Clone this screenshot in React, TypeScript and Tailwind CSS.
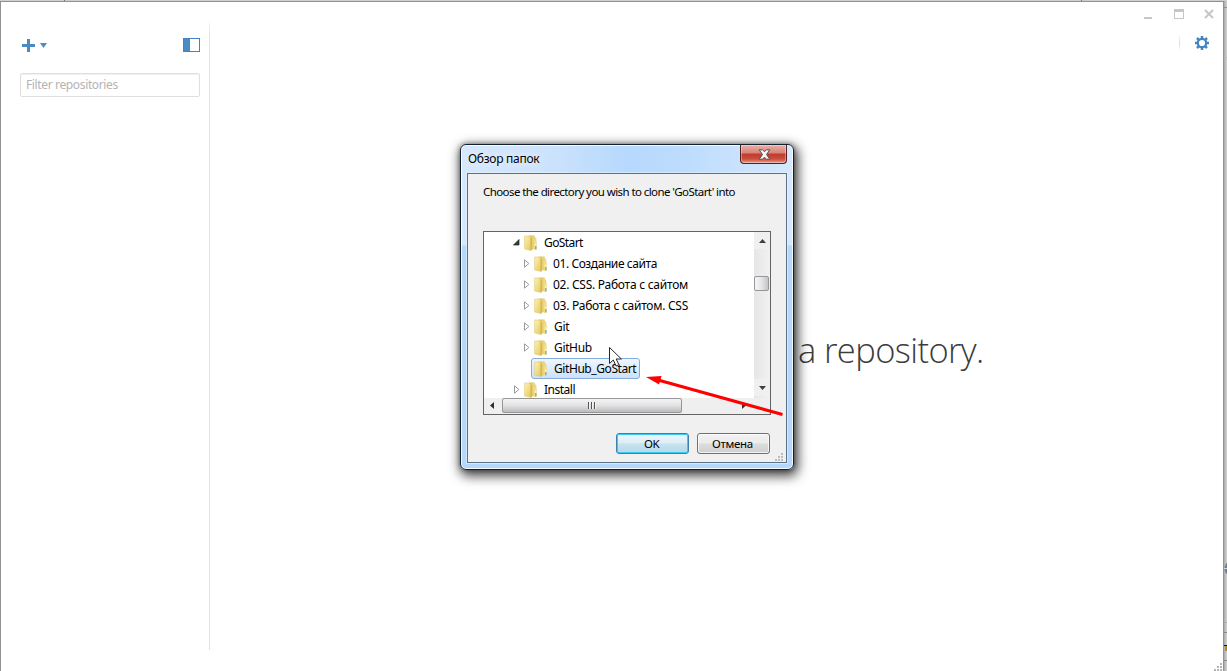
import React from "react";

type Row = { label: string; depth: 0 | 1; state: "open" | "closed" | "leaf"; width: string };

const rows: Row[] = [
  { label: "GoStart", depth: 0, state: "open", width: "tracking-[-0.6px]" },
  { label: "01. Создание сайта", depth: 1, state: "closed", width: "-ml-px tracking-[-0.42px]" },
  { label: "02. CSS. Работа с сайтом", depth: 1, state: "closed", width: "-ml-px tracking-[-0.26px]" },
  { label: "03. Работа с сайтом. CSS", depth: 1, state: "closed", width: "-ml-px tracking-[-0.26px]" },
  { label: "Git", depth: 1, state: "closed", width: "tracking-[-0.3px]" },
  { label: "GitHub", depth: 1, state: "closed", width: "tracking-[-0.35px]" },
  { label: "GitHub_GoStart", depth: 1, state: "leaf", width: "tracking-[-0.42px]" },
  { label: "Install", depth: 0, state: "closed", width: "tracking-[-0.5px]" },
];

function Folder() {
  return (
    <svg width="14" height="16" viewBox="0 0 14 16" className="shrink-0">
      <defs>
        <linearGradient id="fold" x1="0" y1="0" x2="1" y2="1">
          <stop offset="0" stopColor="#fbf3b6" />
          <stop offset="1" stopColor="#e6c85c" />
        </linearGradient>
        <linearGradient id="back" x1="0" y1="0" x2="1" y2="0">
          <stop offset="0" stopColor="#dcba4c" />
          <stop offset="1" stopColor="#f3e393" />
        </linearGradient>
      </defs>
      <path d="M5 .8h5.500v2.200h1.500v11H5z" fill="url(#back)" stroke="#e0cb7c" strokeWidth=".6" />
      <path d="M10 6.500h2.800v8.500H10z" fill="#f1de8b" />
      <path d="M.6 1h4.600l1.800 1.500v12.900L.6 14z" fill="url(#fold)" stroke="#dfca78" strokeWidth=".6" />
      <path d="M6.600 2.600l1.200.6v12.200l-1.200-.2z" fill="#d3b143" />
      <path d="M11.200 8.500h1.200v2.500h-1.200z" fill="#e6f5f7" />
      <path d="M11.200 11h1.200v3.300h-1.200z" fill="#55aee0" />
    </svg>
  );
}

function Twisty({ state }: { state: Row["state"] }) {
  return (
    <svg width="7" height="9" viewBox="0 0 7 9" className="shrink-0">
      {state === "open" && <path d="M6 1.500V7H.5z" fill="#3a3a3a" stroke="#222" strokeWidth=".7" />}
      {state === "closed" && <path d="M1.500.8v7.400L5.900 4.500z" fill="#fff" stroke="#9a9a9a" strokeWidth="1" />}
    </svg>
  );
}

function TreeRow({ row }: { row: Row }) {
  const selected = row.state === "leaf";
  return (
    <div className={"flex h-[21px] shrink-0 items-center " + (row.depth ? "pl-[39px]" : "pl-[29px]")}>
      <Twisty state={row.state} />
      <div
        className={
          "ml-px flex h-[21px] items-center rounded-[3px] border pl-[2px] " +
          (selected
            ? "w-[109px] border-[#84acdd] bg-gradient-to-b from-[#eff6fe] to-[#cce1fb]"
            : "border-transparent")
        }
      >
        <Folder />
        <div className="ml-[6px] flex">
          <span className={"text-[12px] leading-[18px] whitespace-nowrap text-black " + row.width}>{row.label}</span>
        </div>
      </div>
    </div>
  );
}

function VerticalScrollbar() {
  return (
    <div className="flex w-[16px] shrink-0 flex-col items-start bg-gradient-to-r from-[#e6e6e6] to-[#f1f1f1]">
      <div className="flex h-[17px] w-full items-center justify-center bg-[#f0f0f0]">
        <svg width="7" height="4" viewBox="0 0 7 4"><path d="M0 4L3.500 0 7 4z" fill="#404040" /></svg>
      </div>
      <div className="mt-[27px] h-[15px] w-[15px] rounded-[2px] border border-[#979797] bg-gradient-to-r from-[#f5f5f5] via-[#e6e6e9] to-[#c4c4c8]" />
      <div className="grow" />
      <div className="mb-[2px] flex h-[17px] w-full items-center justify-center bg-[#f0f0f0]">
        <svg width="7" height="4" viewBox="0 0 7 4"><path d="M0 0h7L3.500 4z" fill="#404040" /></svg>
      </div>
    </div>
  );
}

function HorizontalScrollbar() {
  return (
    <div className="flex h-[16px] shrink-0 items-start bg-[#efefef]">
      <div className="flex h-[15px] w-[18px] items-center justify-center pr-[2px]">
        <svg width="4" height="7" viewBox="0 0 4 7"><path d="M4 0v7L0 3.500z" fill="#303030" /></svg>
      </div>
      <div className="flex h-[15px] w-[180px] items-center justify-center gap-px rounded-[2px] border border-[#979797] bg-gradient-to-b from-[#f4f4f4] via-[#e2e2e4] to-[#bcbcbf]">
        <div className="h-[7px] w-[2px] border-r border-[#f5f5f5] bg-[#555]" />
        <div className="h-[7px] w-[2px] border-r border-[#f5f5f5] bg-[#555]" />
        <div className="h-[7px] w-[2px] border-r border-[#f5f5f5] bg-[#555]" />
      </div>
      <div className="grow" />
      <svg width="4" height="7" viewBox="0 0 4 7" className="mt-[4px] mr-[24px]"><path d="M0 0v7l4-3.500z" fill="#303030" /></svg>
    </div>
  );
}

function Grip({ color }: { color: string }) {
  return (
    <svg width="8" height="8" viewBox="0 0 8 8" fill={color}>
      <path d="M6 0h2v2H6zM3 3h2v2H3zM6 3h2v2H6zM0 6h2v2H0zM3 6h2v2H3zM6 6h2v2H6z" />
    </svg>
  );
}

function FolderDialog() {
  return (
    <div className="absolute top-[144px] left-[460px] flex h-[326px] w-[334px] flex-col rounded-[6px] border border-[#14202d] bg-[linear-gradient(180deg,transparent_100px,#b5d7fb_101px,#b5d7fb_100%),linear-gradient(90deg,#d6e8fc_0%,#cde3fc_25%,#b7d9fd_50%,#bddcfd_67%,#d5e8fd_100%)] px-[6px] pb-[6px] shadow-[inset_0_0_0_1px_rgba(255,255,255,0.85),2px_4px_12px_2px_rgba(0,0,0,0.72),0_0_5px_rgba(0,0,0,0.4)]">
      <div className="flex h-[28px] shrink-0 items-start justify-between">
        <span className="mt-[5px] ml-px text-[12px] leading-[17px] tracking-[-0.27px] text-black [text-shadow:0_0_8px_#fff]">Обзор папок</span>
        <div className="flex h-[19px] w-[47px] items-center justify-center rounded-b-[4px] border border-t-0 border-[#511f25] bg-[linear-gradient(180deg,#e7b1a8_0%,#d98276_45%,#bf3b2b_50%,#c9503f_78%,#e99c87_100%)] shadow-[inset_0_0_0_1px_rgba(255,255,255,0.35)]">
          <svg width="13" height="11" viewBox="0 0 13 11" className="ml-px">
            <path d="M1.200.8h3.400l1.900 2 1.900-2h3.400L8.500 5.500l3.300 4.700H8.400l-1.900-2-1.900 2H1.200l3.300-4.700z" fill="#f6f6f6" stroke="#52505e" strokeWidth="1" />
          </svg>
        </div>
      </div>
      <div className="flex grow flex-col border border-[#5c7183] bg-[#f0f0f0] px-[15px] shadow-[0_0_0_1px_rgba(230,243,255,0.6)]">
        <p className="mt-[9px] h-[49px] text-[11.5px] leading-[17px] tracking-[-0.58px] whitespace-nowrap text-black">
          Choose the directory you wish to clone 'GoStart' into
        </p>
        <div className="-mt-px flex h-[184px] w-[288px] shrink-0 flex-col border border-[#646464] bg-white">
          <div className="flex h-[166px] overflow-hidden">
            <div className="flex grow flex-col overflow-hidden">
              {rows.map((r) => <TreeRow key={r.label} row={r} />)}
            </div>
            <VerticalScrollbar />
          </div>
          <HorizontalScrollbar />
        </div>
        <div className="mt-[18px] mr-px flex justify-end gap-[8px]">
          <button className="h-[21px] w-[73px] rounded-[3px] border border-[#3c7fb1] bg-[linear-gradient(180deg,#eef7fb_0%,#dceef7_48%,#c6e2ef_52%,#b5d9e9_100%)] pr-[2px] text-[11.5px] leading-[19px] tracking-[-0.6px] text-black shadow-[inset_0_0_0_1px_#36ccf6]">OK</button>
          <button className="h-[21px] w-[73px] rounded-[3px] border border-[#707070] bg-[linear-gradient(180deg,#f3f3f3_0%,#ebebeb_48%,#dddddd_52%,#cfcfcf_100%)] pr-[2px] text-[11.5px] leading-[19px] tracking-[-0.3px] text-black shadow-[inset_0_0_0_1px_rgba(255,255,255,0.75)]">Отмена</button>
        </div>
        <div className="mt-[-1px] -mr-[12px] flex justify-end"><Grip color="#bcbcbc" /></div>
      </div>
    </div>
  );
}

function Sidebar() {
  return (
    <aside className="flex w-[208px] shrink-0 flex-col pt-[36px] pr-[9px] pl-[19px]">
      <div className="flex h-[14px] items-center">
        <svg width="13" height="13" viewBox="0 0 13 13" className="ml-[2px]"><path d="M5 0h3v5h5v3H8v5H5V8H0V5h5z" fill="#4b8bc4" /></svg>
        <svg width="7" height="5" viewBox="0 0 7 5" className="ml-[5px]"><path d="M0 0h7L3.500 5z" fill="#4b8bc4" /></svg>
        <div className="grow" />
        <div className="flex h-[14px] w-[17px] border border-[#4183c4] bg-white"><div className="w-[6px] bg-[#4b8bc4]" /></div>
      </div>
      <div className="mt-[21px] flex h-[24px] items-center rounded-[2px] border border-[#dfdfdf] pl-[5px] text-[12px] tracking-[-0.36px] text-[#b4b4b4] shadow-[inset_0_1px_1px_rgba(0,0,0,0.06)]">
        Filter repositories
      </div>
    </aside>
  );
}

function WindowControls() {
  return (
    <div className="flex flex-col items-end">
      <svg width="70" height="10" viewBox="0 0 70 10" className="mt-[7px] mr-[9px]" fill="#c6c6c6">
        <path d="M0 8h8v2H0zM30 0h10v10H30zm1 3v6h8V3z" fillRule="evenodd" />
        <path d="M61 1l8 8M69 1l-8 8" stroke="#c6c6c6" strokeWidth="2" />
      </svg>
      <div className="mt-[15px] mr-[14px] flex items-center">
        <div className="mr-[15px] h-[18px] w-px bg-gradient-to-b from-white via-[#dcdcdc] to-white" />
        <svg width="14" height="14" viewBox="0 0 14 14">
          <circle cx="7" cy="7" r="4.200" fill="none" stroke="#4183c4" strokeWidth="2.200" />
          <path d="M7 0v2M7 12v2M0 7h2M12 7h2M2 2l1.600 1.600M10.400 10.400L12 12M12 2l-1.600 1.600M3.600 10.400L2 12" stroke="#4183c4" strokeWidth="2.500" />
        </svg>
      </div>
    </div>
  );
}

function BackgroundEdge() {
  return (
    <div className="flex w-[3px] shrink-0 flex-col overflow-hidden bg-gradient-to-r from-[#aaaaaa] to-[#d6d6d6]">
      <div className="h-[7px] shrink-0 border-b border-[#929292]" />
      <div className="h-[50px] shrink-0 border-b border-[#bbb]" />
      <div className="h-[502px] shrink-0" />
      <svg width="3" height="17" viewBox="0 0 3 17" className="shrink-0">
        <circle cx="9" cy="8.500" r="8.500" fill="#747f92" />
        <path d="M0 8h3v1H0z" fill="#d1d5dc" />
      </svg>
      <div className="h-[46px] shrink-0 border-b border-[#aaa]" />
      <div className="h-[10px] shrink-0 border-b border-[#888]" />
      <div className="h-[13px] shrink-0 border-b border-[#111]" />
      <div className="ml-px h-[5px] w-[2px] shrink-0 bg-[#ba8b17]" />
      <div className="h-[10px] shrink-0 border-b border-[#888]" />
    </div>
  );
}

export default function App() {
  return (
    <div className="relative flex h-[671px] w-[1227px] flex-col overflow-hidden bg-white font-['Noto_Sans',sans-serif]">
      <div className="flex h-px shrink-0 bg-[#cfcfcf]">
        <div className="ml-[64px] w-px bg-[#777]" />
        <div className="ml-[1016px] w-px bg-[#777]" />
      </div>
      <div className="flex grow">
        <div className="flex w-[1224px] shrink-0 border border-b-0 border-[#929292] bg-white">
          <Sidebar />
          <div className="mt-[18px] mb-[21px] w-px bg-gradient-to-b from-white via-[#e2e2e2] via-[2%] to-[#e2e2e2]" />
          <main className="flex grow flex-col">
            <WindowControls />
            <h1 className="mt-[276px] ml-[588px] font-['Open_Sans',sans-serif] text-[34.500px] leading-[44px] font-light tracking-[-0.6px] whitespace-nowrap text-[#3c3c3c]">
              a repository.
            </h1>
            <div className="mt-auto flex justify-end pr-px"><Grip color="#b5b5b5" /></div>
          </main>
        </div>
        <BackgroundEdge />
      </div>
      <FolderDialog />
      <svg className="absolute top-[340px] left-[600px]" width="190" height="82" viewBox="600 340 190 82">
        <path d="M609.500 347.500v16l3.800-3.500 2.800 6 2.800-1.300-2.700-5.700h5.200z" fill="#fff" stroke="#26262e" strokeWidth="1" />
        <path d="M658 380l124.500 34.500" stroke="#f00" strokeWidth="3" />
        <path d="M646 377l15.500-1-2.400 8.500z" fill="#f00" />
      </svg>
    </div>
  );
}
